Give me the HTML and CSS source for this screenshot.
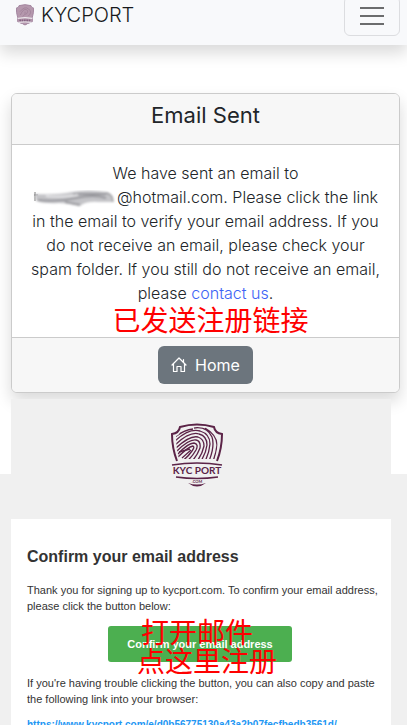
FILE: index.html
```html
<!DOCTYPE html>
<html lang="en">
<head>
<meta charset="utf-8">
<meta name="viewport" content="width=device-width, initial-scale=1">
<title>KYCPORT - Email Sent</title>
<link rel="stylesheet" href="styles.css">
</head>
<body>
<header class="navbar">
  <a class="brand" href="#">
    <svg class="brand-logo" viewBox="0 0 54 64" aria-hidden="true">
      <path d="M9 4Q27-2 45 4Q45 11 53 11Q53 26 49 39V52Q40 56 34 58Q27 66 20 58Q12 56 5 52V39Q1 26 1 11Q9 11 9 4Z" fill="#b598ad" stroke="#a486a0" stroke-width="3"/>
      <path d="M13 32Q22 12 31 16T29 31M12 22Q26 4 38 14T37 35M20 37Q31 29 27 22" fill="none" stroke="#9a7a94" stroke-width="2"/>
      <path d="M5 42Q27 38 49 42M7 54Q27 51 47 54" fill="none" stroke="#f8f9fa" stroke-width="3"/>
      <path d="M10 48H44" stroke="#846280" stroke-width="5" stroke-dasharray="5 2"/>
    </svg>
    <span>KYCPORT</span>
  </a>
  <button class="toggler" type="button" aria-label="Menu">
    <svg viewBox="0 0 30 30" aria-hidden="true"><path d="M3 7H27M3 15H27M3 23H27" stroke="#6b6c6d" stroke-width="2"/></svg>
  </button>
</header>

<main>
  <section class="card">
    <h1 class="card-header">Email Sent</h1>
    <div class="card-body">
      <p>We have sent an email to <span class="address"><svg class="smudge" viewBox="0 0 84 18" aria-hidden="true">
        <defs><filter id="soft" x="-10%" y="-30%" width="120%" height="160%"><feGaussianBlur stdDeviation="0.8"/></filter></defs>
        <path d="M2 2V11M1 5H5" fill="none" stroke="#777" stroke-width="1"/>
        <g filter="url(#soft)">
          <path d="M2 4Q24 5 39 2T74 2Q81 4 80 12L66 12Q53 11 47 16Q36 13 26 13Q12 14 3 11Z" fill="#c4c4c8"/>
          <path d="M5 10Q25 12 43 8T73 8M32 12L47 15M40 4L73 4" fill="none" stroke="#97979c" stroke-width="2"/>
          <path d="M13 6Q31 8 45 5" fill="none" stroke="#e4e4e6" stroke-width="2"/>
          <path d="M73 3Q80 4 80 12" fill="none" stroke="#77777a" stroke-width="1"/>
        </g></svg>@hotmail.com.</span> Please click the link in the email to verify your email address. If you do not receive an email, please check your spam folder. If you still do not receive an email, please <a href="#">contact us</a>.</p>
      <span class="note note-sent" lang="zh">已发送注册链接</span>
    </div>
    <div class="card-footer">
      <button class="home" type="button">
        <svg viewBox="0 0 16 16" aria-hidden="true"><path d="M1 8L8 1L15 8M2.500 6.500V14.500H6V9.500H10V14.500H13.500V6.500M12.500 5V2.500" fill="none" stroke="currentColor" stroke-width="1.200" stroke-linecap="round" stroke-linejoin="round"/></svg>
        <span>Home</span>
      </button>
    </div>
  </section>

  <section class="mail">
    <div class="mail-top">
      <svg class="mail-logo" viewBox="0 0 54 64" role="img" aria-label="KYC Port">
        <defs><clipPath id="print"><path d="M11 6Q27 2 43 6Q44 12 48 13Q48 26 45 36H9Q6 26 6 13Q10 12 11 6Z"/></clipPath></defs>
        <g fill="none" stroke="#5b2347">
          <path d="M7 38Q2 25 2 11Q9 10 10 4Q27-1 44 4Q45 10 52 11Q52 25 47 38" stroke-width="2"/>
          <g clip-path="url(#print)" stroke-width="1.300">
            <path d="M5 14Q14 7 23 6"/>
            <path d="M5 18Q19 5 30 8Q40 11 40 21Q39 31 35 38"/>
            <path d="M5 22Q20 8 29 11Q37 13 37 22Q36 30 31 38"/>
            <path d="M6 25Q20 12 28 14Q34 16 34 23Q32 32 27 38"/>
            <path d="M7 28Q19 16 26 17Q31 18 30 25Q27 33 22 38"/>
            <path d="M8 31Q18 20 24 20Q29 21 26 27Q22 34 17 38"/>
            <path d="M8 34Q18 24 23 23Q25 24 22 28Q17 35 12 38"/>
            <path d="M9 29L20 26M12 35L21 27"/>
            <path d="M24 5Q37 3 42 14Q45 23 39 38M35 5Q47 12 47 22Q46 31 43 38"/>
          </g>
          <path d="M2 42Q27 38 52 42M6 54Q27 57 48 54" stroke-width="1.500"/>
        </g>
        <text x="27" y="51" text-anchor="middle" class="logo-name">KYC PORT</text>
        <text x="27" y="60" text-anchor="middle" class="logo-com">.COM</text>
        <path d="M18 60Q27 63 36 60Q27 67 18 60Z" fill="#5b2347"/>
      </svg>
    </div>
    <article class="mail-body">
      <h2>Confirm your email address</h2>
      <p>Thank you for signing up to kycport.com. To confirm your email address, please click the button below:</p>
      <div class="confirm-row">
        <button class="confirm" type="button">Confirm your email address</button>
        <span class="note note-open" lang="zh">打开邮件</span>
        <span class="note note-click" lang="zh">点这里注册</span>
      </div>
      <p>If you're having trouble clicking the button, you can also copy and paste the following link into your browser:</p>
      <a class="mail-link" href="#">https://www.kycport.com/e/d0b56775130a43a2b07fecfbedb3561d/</a>
    </article>
  </section>
</main>
</body>
</html>
```
FILE: styles.css
```css
* { box-sizing: border-box; }
html { overflow: hidden; }
body {
  margin: 0;
  height: 100vh;
  overflow: hidden;
  background: #fff;
  color: #212529;
  font: 300 16px/24px Inter, "Noto Sans CJK SC", sans-serif;
}
button { font: inherit; cursor: pointer; }
a { color: #3d63f5; text-decoration: none; }
.navbar {
  display: flex;
  align-items: flex-end;
  justify-content: space-between;
  height: 45px;
  padding: 0 7px 9px 16px;
  background: #f8f9fb;
  box-shadow: 0 8px 16px rgba(0, 0, 0, .15);
}
.brand {
  display: flex;
  align-items: center;
  gap: 7px;
  padding-bottom: 6px;
  color: #17191c;
  font-size: 20px;
  line-height: 30px;
}
.brand-logo { width: 18px; height: 22px; }
.toggler {
  flex: none;
  width: 56px;
  height: 40px;
  padding: 4px 12px;
  border: 1px solid #dcdde0;
  border-radius: 6px;
  background: transparent;
}
.toggler svg { display: block; width: 30px; height: 30px; }
.card {
  margin: 48px 7px 0 11px;
  border: 1px solid #cbcbcb;
  border-radius: 6px;
  background: #fff;
  box-shadow: 0 8px 16px rgba(0, 0, 0, .15);
  text-align: center;
}
.card-header {
  margin: 0;
  padding: 8px 16px 16px;
  border-bottom: 1px solid #cbcbcb;
  border-radius: 5px 5px 0 0;
  background: #f7f7f7;
  font-size: 22px;
  font-weight: 400;
  line-height: 26px;
}
.card-body { position: relative; padding: 16px; }
.card-body p { margin: 0 0 16px; }
.address { white-space: nowrap; }
.smudge { width: 84px; height: 18px; vertical-align: -5px; }
.card-footer {
  padding: 8px 16px;
  border-top: 1px solid #cbcbcb;
  border-radius: 0 0 5px 5px;
  background: #f7f7f7;
}
.home {
  display: inline-flex;
  align-items: center;
  gap: 8px;
  height: 38px;
  padding: 0 13px;
  border: 0;
  border-radius: 6px;
  background: #6c757d;
  color: #fff;
  font-weight: 400;
  vertical-align: top;
}
.home svg { width: 16px; height: 16px; }
.note {
  position: absolute;
  color: #f00;
  font: 400 28px/32px "Noto Sans CJK SC", sans-serif;
  white-space: nowrap;
  pointer-events: none;
}
.note-sent { right: 0; bottom: 2px; left: 10px; }
.mail {
  position: relative;
  margin-top: 6px;
  padding: 0 16px 0 11px;
  background: linear-gradient(transparent 75px, #f0f0f0 75px);
  color: #333;
  font: 400 11px/16px "Liberation Sans", Arial, sans-serif;
}
.mail-top {
  height: 120px;
  padding-top: 24px;
  background: #f0f0f0;
  text-align: center;
}
.mail-logo { width: 54px; height: 64px; margin-right: 9px; }
.logo-name { fill: #5b2347; font: 700 10px/10px Lato, sans-serif; }
.logo-com { fill: #5b2347; font: 700 4px/4px Lato, sans-serif; }
.mail-body { padding: 28px 8px 16px 16px; background: #fff; }
.mail-body h2 {
  margin: 0 0 15px;
  font-size: 16px;
  line-height: 20px;
}
.mail-body p { margin: 0; }
.confirm-row {
  position: relative;
  margin: 12px 0 13px;
  padding-right: 10px;
  text-align: center;
}
.confirm {
  height: 36px;
  padding: 0 19px;
  border: 0;
  border-radius: 3px;
  background: #4caf50;
  color: #fff;
  font-weight: 700;
  vertical-align: top;
}
.note-open { top: -11px; left: 50%; margin-left: -64px; }
.note-click { top: 18px; left: 50%; margin-left: -68px; }
.mail-link {
  display: block;
  margin-top: 10px;
  color: #2196f3;
  font-size: 10px;
  font-weight: 700;
}
```
